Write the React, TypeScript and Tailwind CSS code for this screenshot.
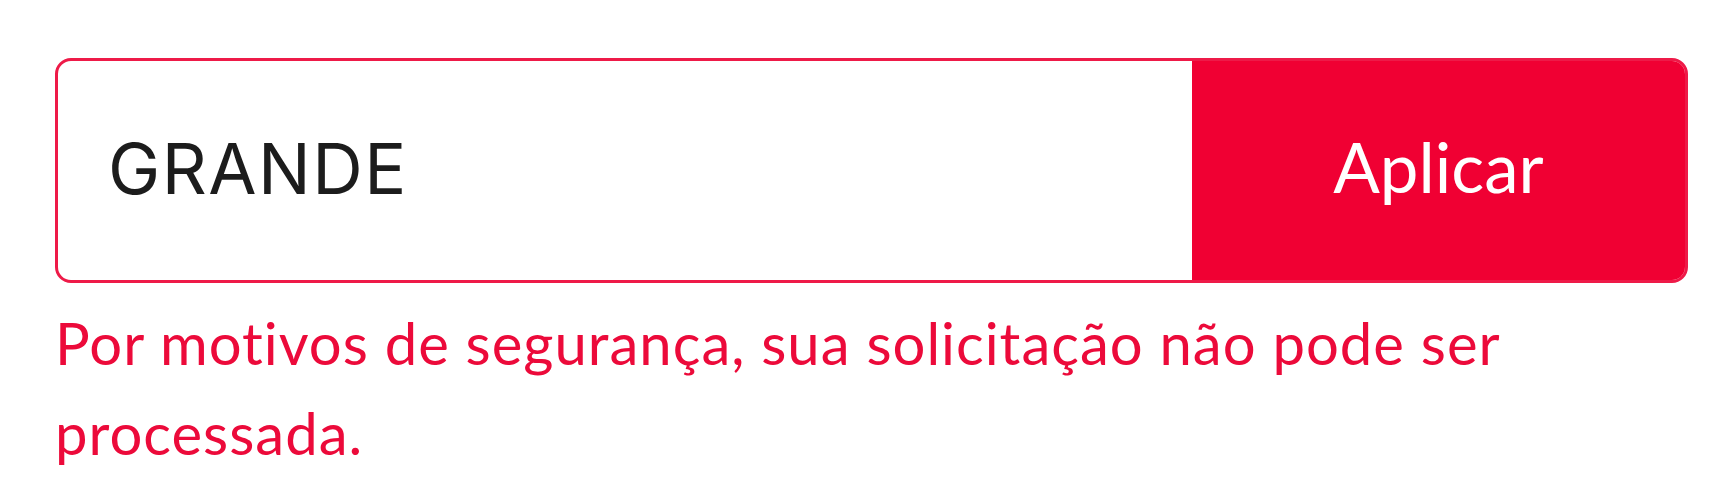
export default function App() {
  return (
    <div className="min-h-[500px] w-[1720px] bg-white pl-[55px] pt-[58px]">
      <div className="flex h-[225px] w-[1633px] overflow-hidden rounded-[16px] border-[3px] border-[#ee1a48]">
        <div className="flex flex-1 items-center pb-[5px] pl-[50px] font-['Inter',sans-serif] text-[70px] tracking-[1.5px] text-[#1c1c1c]">
          GRANDE
        </div>
        <button className="flex w-[493px] items-center justify-center bg-[#f00033] pb-[8px] font-['Lato',sans-serif] text-[69px] text-white">
          Aplicar
        </button>
      </div>
      <p className="mt-[15px] w-[1600px] font-['Lato',sans-serif] text-[58px] leading-[90px] tracking-[1px] text-[#ec0a3a]">
        Por motivos de segurança, sua solicitação não pode ser processada.
      </p>
    </div>
  );
}
